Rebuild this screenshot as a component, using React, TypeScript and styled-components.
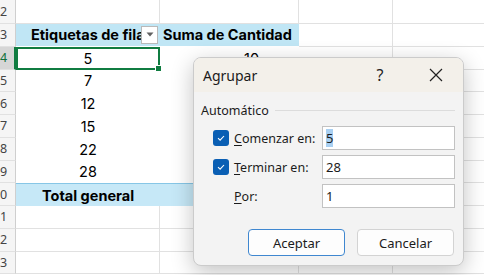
import React, { FC } from 'react'
import styled, { createGlobalStyle, css } from 'styled-components'

const GlobalStyle = createGlobalStyle`
    html, body {
        margin: 0;
        padding: 0;
        background: #ffffff;
        overflow: hidden;
    }
    body {
        width: 484px;
        height: 275px;
        font-family: Inter, 'Noto Sans', sans-serif;
    }
`

type CellKind = 'blank' | 'header' | 'pivot' | 'total' | 'selected'

const COLS = [144, 139, 94, 107]

const Sheet = styled.div({
    position: 'relative',
    display: 'flex',
    flexDirection: 'column',
    width: '484px',
    height: '275px',
    overflow: 'hidden'
})

const Row = styled.div<{ $h: number }>`
    display: flex;
    flex: none;
    height: ${p => p.$h}px;
`

const RowHead = styled.div<{ $active?: boolean }>`
    flex: none;
    width: 16px;
    overflow: hidden;
    display: flex;
    align-items: center;
    box-sizing: border-box;
    background: ${p => (p.$active ? '#d6d6d6' : '#f5f5f5')};
    border-bottom: 1px solid #e1e1e1;
    border-right: ${p => (p.$active ? '2px solid #107c41' : '1px solid #cfcfcf')};
    color: ${p => (p.$active ? '#0f703b' : '#444444')};
    font-family: 'Noto Sans', sans-serif;
    font-size: 12.5px;

    span {
        flex: none;
        width: 32px;
        margin-left: -16px;
        text-align: center;
    }
`

const Cell = styled.div<{ $w: number; $kind: CellKind }>`
    position: relative;
    flex: none;
    width: ${p => p.$w}px;
    box-sizing: border-box;
    display: flex;
    align-items: center;
    font-size: 14.5px;
    color: #000000;
    white-space: nowrap;
    overflow: visible;

    ${p => p.$kind === 'blank' && css`
        border-right: 1px solid #e1e1e1;
        border-bottom: 1px solid #e1e1e1;
    `}
    ${p => p.$kind === 'header' && css`
        background: #c0e6f5;
        font-weight: 700;
        border-bottom: 1px solid #ffffff;
    `}
    ${p => p.$kind === 'pivot' && css`
        justify-content: center;
    `}
    ${p => p.$kind === 'total' && css`
        background: #c6e8f7;
        font-weight: 700;
        border-top: 1px solid #86c6e6;
    `}
    ${p => p.$kind === 'selected' && css`
        justify-content: center;
        border: 2px solid #107c41;
        &::after {
            content: '';
            position: absolute;
            right: -4px;
            bottom: -4px;
            width: 5px;
            height: 5px;
            background: #107c41;
            border: 1px solid #ffffff;
        }
    `}
`

const CellText = styled.span<{ $pad?: number }>`
    padding-left: ${p => p.$pad || 0}px;
    overflow: hidden;
    flex: 1;
`

const DropButton = styled.div({
    flex: 'none',
    width: '17px',
    height: '18px',
    marginRight: '2px',
    boxSizing: 'border-box',
    border: '1px solid #b9b9b9',
    background: '#ffffff',
    display: 'flex',
    alignItems: 'center',
    justifyContent: 'center'
})

const Dialog = styled.div({
    position: 'absolute',
    left: '193px',
    top: '57px',
    width: '271px',
    height: '209px',
    boxSizing: 'border-box',
    borderRadius: '8px',
    border: '1px solid #cbcbcb',
    background: '#f3f3f3',
    boxShadow: '0 6px 22px rgba(0,0,0,0.24)',
    overflow: 'hidden',
    display: 'flex',
    flexDirection: 'column',
    fontFamily: "'Noto Sans', sans-serif",
    fontSize: '12.5px',
    color: '#1b1b1b'
})

const TitleBar = styled.div({
    height: '34px',
    flex: 'none',
    background: '#f3f0ea',
    display: 'flex',
    alignItems: 'center',
    paddingLeft: '9px'
})

const Title = styled.div({
    flex: 1,
    fontSize: '14px'
})

const TitleButton = styled.div<{ $w: number }>`
    flex: none;
    width: ${p => p.$w}px;
    height: 34px;
    display: flex;
    align-items: center;
    justify-content: center;
    font-size: 16px;
    color: #222222;
`

const Body = styled.div({
    flex: 1,
    display: 'flex',
    flexDirection: 'column',
    padding: '10px 8px 0 7px'
})

const Group = styled.div({
    display: 'flex',
    alignItems: 'center',
    gap: '6px',
    height: '16px',
    fontSize: '12.5px'
})

const GroupLine = styled.div({
    flex: 1,
    height: '1px',
    background: '#dcdcdc'
})

const Fields = styled.div({
    display: 'flex',
    flexDirection: 'column',
    gap: '5px',
    marginTop: '8px',
    paddingLeft: '12px'
})

const Field = styled.div({
    display: 'flex',
    alignItems: 'center',
    height: '24px'
})

const Check = styled.div<{ $on?: boolean }>`
    flex: none;
    width: 16px;
    height: 16px;
    border-radius: 3px;
    margin-right: 5px;
    box-sizing: border-box;
    display: flex;
    align-items: center;
    justify-content: center;
    background: ${p => (p.$on ? '#0a5fb4' : 'transparent')};
    visibility: ${p => (p.$on ? 'visible' : 'hidden')};
`

const Label = styled.div({
    flex: 'none',
    width: '88px'
})

const Input = styled.div({
    flex: 'none',
    width: '133px',
    height: '24px',
    boxSizing: 'border-box',
    border: '1px solid #c2c2c2',
    background: '#ffffff',
    display: 'flex',
    alignItems: 'center',
    paddingLeft: '3px',
    fontSize: '13px'
})

const Selected = styled.span({
    background: '#a9d0f2'
})

const Buttons = styled.div({
    display: 'flex',
    justifyContent: 'flex-end',
    gap: '12px',
    marginTop: '21px',
    paddingRight: '1px'
})

const Button = styled.div<{ $primary?: boolean }>`
    width: 97px;
    height: 27px;
    box-sizing: border-box;
    border-radius: 4px;
    background: #fdfdfd;
    border: 1px solid ${p => (p.$primary ? '#3f87d0' : '#d3d3d3')};
    display: flex;
    align-items: center;
    justify-content: center;
    font-size: 13px;
`

const Under = styled.span({
    textDecoration: 'underline',
    textUnderlineOffset: '2px'
})

const rowHeights = [24, 22.75, 22.75, 22.75, 22.75, 22.75, 22.75, 22.75, 22.75, 22.75, 22.75, 22.75]
const pivotValues = ['7', '12', '15', '22', '28']

const BlankCells: FC<{ from?: number }> = ({ from = 0 }) => (
    <>
        {COLS.slice(from).map((w, i) => (
            <Cell key={i} $w={w} $kind='blank' />
        ))}
    </>
)

const CheckMark = () => (
    <svg width='10' height='10' viewBox='0 0 10 10'>
        <path d='M2 5.2 L4.1 7.2 L8 3' fill='none' stroke='#ffffff' strokeWidth='1.1' />
    </svg>
)

const App: FC = () => {
    return (
        <>
            <GlobalStyle />
            <Sheet>
                <Row $h={rowHeights[0]}>
                    <RowHead><span>12</span></RowHead>
                    <BlankCells />
                </Row>
                <Row $h={rowHeights[1]}>
                    <RowHead><span>13</span></RowHead>
                    <Cell $w={COLS[0]} $kind='header'>
                        <CellText $pad={15}>Etiquetas de fila</CellText>
                        <DropButton>
                            <svg width='8' height='5' viewBox='0 0 8 5'>
                                <path d='M0.5 0.5 L7.5 0.5 L4 4.5 Z' fill='#606060' />
                            </svg>
                        </DropButton>
                    </Cell>
                    <Cell $w={COLS[1]} $kind='header'>
                        <CellText $pad={3}>Suma de Cantidad</CellText>
                    </Cell>
                    <BlankCells from={2} />
                </Row>
                <Row $h={rowHeights[2]}>
                    <RowHead $active><span>14</span></RowHead>
                    <Cell $w={COLS[0]} $kind='selected'>5</Cell>
                    <Cell $w={COLS[1]} $kind='pivot'>
                        <CellText $pad={84}>10</CellText>
                    </Cell>
                    <BlankCells from={2} />
                </Row>
                {pivotValues.map((v, i) => (
                    <Row key={v} $h={rowHeights[3 + i]}>
                        <RowHead><span>{15 + i}</span></RowHead>
                        <Cell $w={COLS[0]} $kind='pivot'>{v}</Cell>
                        <Cell $w={COLS[1]} $kind='pivot' />
                        <BlankCells from={2} />
                    </Row>
                ))}
                <Row $h={rowHeights[8]}>
                    <RowHead><span>20</span></RowHead>
                    <Cell $w={COLS[0]} $kind='total'>
                        <CellText $pad={26}>Total general</CellText>
                    </Cell>
                    <Cell $w={COLS[1]} $kind='total' />
                    <BlankCells from={2} />
                </Row>
                {[21, 22, 23].map((n, i) => (
                    <Row key={n} $h={rowHeights[9 + i]}>
                        <RowHead><span>{n}</span></RowHead>
                        <BlankCells />
                    </Row>
                ))}

                <Dialog>
                    <TitleBar>
                        <Title>Agrupar</Title>
                        <TitleButton $w={58}>?</TitleButton>
                        <TitleButton $w={54}>
                            <svg width='14' height='14' viewBox='0 0 14 14'>
                                <path d='M1 1 L13 13 M13 1 L1 13' stroke='#222222' strokeWidth='1.2' />
                            </svg>
                        </TitleButton>
                    </TitleBar>
                    <Body>
                        <Group>
                            <span>Automático</span>
                            <GroupLine />
                        </Group>
                        <Fields>
                            <Field>
                                <Check $on><CheckMark /></Check>
                                <Label><Under>C</Under>omenzar en:</Label>
                                <Input><Selected>5</Selected></Input>
                            </Field>
                            <Field>
                                <Check $on><CheckMark /></Check>
                                <Label><Under>T</Under>erminar en:</Label>
                                <Input>28</Input>
                            </Field>
                            <Field>
                                <Check />
                                <Label><Under>P</Under>or:</Label>
                                <Input>1</Input>
                            </Field>
                        </Fields>
                        <Buttons>
                            <Button $primary>Aceptar</Button>
                            <Button>Cancelar</Button>
                        </Buttons>
                    </Body>
                </Dialog>
            </Sheet>
        </>
    )
}

export default App
